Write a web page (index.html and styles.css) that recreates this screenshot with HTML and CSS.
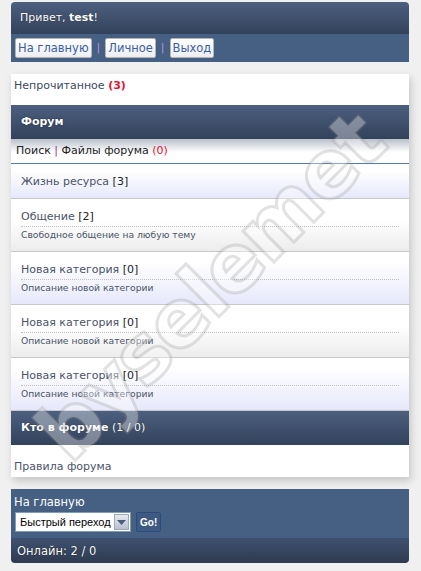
FILE: index.html
```html
<!doctype html>
<html>
	<head>
		<meta charset="utf-8">
		<title>Форум</title>
		<link rel="stylesheet" href="styles.css">
	</head>
	<body>
		<div class="page">
			<div class="head">
				Привет, <b>test</b>!
			</div>
			<div class="navbar">
				<a class="btn" href="#">На главную</a>
				<span class="sep">|</span>
				<a class="btn" href="#">Личное</a>
				<span class="sep">|</span>
				<a class="btn" href="#">Выход</a>
			</div>

			<div class="content">
				<div class="unread">
					Непрочитанное <span class="count-bold">(3)</span>
				</div>

				<div class="bar bar-forum">Форум</div>
				<div class="subbar">
					Поиск <span class="sep">|</span> Файлы форума <span class="count">(0)</span>
				</div>

				<div class="cat cat-single odd">
					<div class="cat-title">Жизнь ресурса <span class="num">[3]</span></div>
				</div>
				<div class="cat even">
					<div class="cat-title line">Общение <span class="num">[2]</span></div>
					<div class="cat-desc">Свободное общение на любую тему</div>
				</div>
				<div class="cat odd">
					<div class="cat-title line">Новая категория <span class="num">[0]</span></div>
					<div class="cat-desc">Описание новой категории</div>
				</div>
				<div class="cat even">
					<div class="cat-title line">Новая категория <span class="num">[0]</span></div>
					<div class="cat-desc">Описание новой категории</div>
				</div>
				<div class="cat odd">
					<div class="cat-title line">Новая категория <span class="num">[0]</span></div>
					<div class="cat-desc">Описание новой категории</div>
				</div>

				<div class="bar bar-who"><b>Кто в форуме</b> (1 / 0)</div>
				<div class="rules">Правила форума</div>
			</div>

			<div class="foot">
				<div class="foot-link">На главную</div>
				<form class="jump-form">
					<span class="jump">
						<select class="jump-select">
							<option>Быстрый переход</option>
						</select>
						<span class="jump-arrow">
							<svg width="9" height="5" viewBox="0 0 9 5"><path d="M0 0h9L4.5 5z" fill="#4a5a7a"/></svg>
						</span>
					</span>
					<button class="go" type="button">Go!</button>
				</form>
			</div>
			<div class="online">Онлайн: 2 / 0</div>
		</div>

		<!-- watermark over the screenshot -->
		<div class="stamp">byselemet</div>
	</body>
</html>
```

FILE: styles.css
```css
body {
	margin: 0;
	background: #f0f0f0;
	font-family: "DejaVu Sans", Verdana, sans-serif;
	font-size: 11px;
	position: relative;
	overflow: hidden;
	height: 571px;
}

.page {
	width: 398px;
	margin: 2px 0 0 11px;
}

.head {
	height: 32px;
	line-height: 32px;
	padding-left: 9px;
	color: white;
	border-radius: 4px 4px 0 0;
	background: linear-gradient(#4c5f7f, #33425b);
	text-shadow: 0 0 1px rgba(0, 0, 0, 0.6);
}

.navbar {
	height: 28px;
	padding: 4px 0 0 4px;
	box-sizing: border-box;
	background: #466084;
	display: flex;
	align-items: flex-start;
	gap: 5px;
}

.btn {
	display: inline-block;
	height: 18px;
	line-height: 18px;
	padding: 0 2px;
	border: 1px solid #b4b4b4;
	border-radius: 2px;
	background: linear-gradient(#ffffff, #eceef2);
	color: #3b5f9f;
	text-decoration: none;
	font-size: 11.5px;
}

.sep {
	color: #8c3a9a;
}

.navbar .sep {
	line-height: 20px;
	color: #c58ad8;
}

.content {
	margin-top: 12px;
	background: white;
	box-shadow: 2px 4px 8px rgba(0, 0, 0, 0.18);
}

.unread {
	height: 31px;
	padding: 5px 0 0 3px;
	box-sizing: border-box;
	color: #3c4a5e;
}

.count-bold {
	color: #e8102c;
	font-weight: bold;
}

.count {
	color: #e8102c;
}

.bar {
	height: 34px;
	line-height: 34px;
	padding-left: 10px;
	color: white;
	background: linear-gradient(#4c5f7f, #33425b);
	text-shadow: 0 0 1px rgba(0, 0, 0, 0.5);
}

.bar-forum {
	font-weight: bold;
	text-shadow: 0 0 2px rgba(0, 0, 0, 0.6);
}

.subbar {
	height: 24px;
	line-height: 24px;
	padding-left: 5px;
	color: #222;
	border-bottom: 1px solid #5a7aa6;
	background: linear-gradient(#b9bfc9, #ffffff 55%);
}

.cat {
	padding: 9px 10px 0 10px;
	border-bottom: 1px solid #c8c8c8;
	box-sizing: border-box;
	height: 53px;
}

.cat-single {
	height: 35px;
}

.odd {
	background: linear-gradient(#ffffff 20%, #e6e8fb);
}

.even {
	background: linear-gradient(#ffffff 40%, #ececec);
}

.cat-title {
	color: #4a5468;
	line-height: 17px;
}

.cat-title.line {
	border-bottom: 1px dotted #c0c0c0;
	padding-bottom: 1px;
}

.num {
	color: #222;
}

.cat-desc {
	color: #4a5468;
	font-size: 9.2px;
	line-height: 15px;
}

.rules {
	height: 32px;
	padding: 15px 0 0 3px;
	box-sizing: border-box;
	color: #4a5468;
}

.foot {
	margin-top: 12px;
	background: #466084;
	padding: 5px 0 6px 3px;
	color: white;
}

.foot-link {
	line-height: 16px;
	font-size: 11.5px;
}

.jump-form {
	margin: 2px 0 0 1px;
	display: flex;
	gap: 5px;
}

.jump {
	display: inline-flex;
	height: 18px;
	border: 1px solid #7f9db9;
	background: white;
}

.jump-select {
	appearance: none;
	border: none;
	background: white;
	font-family: "Liberation Sans", Arial, sans-serif;
	font-size: 11px;
	padding: 0 0 0 4px;
	width: 97px;
	color: black;
}

.jump-arrow {
	width: 15px;
	margin: 1px;
	background: linear-gradient(#e6e9ef, #b8c0cf);
	border: 1px solid #a0a8b8;
	box-sizing: border-box;
	display: flex;
	align-items: center;
	justify-content: center;
}

.go {
	height: 20px;
	padding: 0 3px;
	border: 1px solid #2a4b7e;
	border-radius: 2px;
	background: #3f5a82;
	color: white;
	font-family: "Liberation Sans", Arial, sans-serif;
	font-size: 10px;
	font-weight: bold;
}

.online {
	height: 25px;
	line-height: 26px;
	padding-left: 6px;
	color: white;
	font-size: 11.5px;
	border-radius: 0 0 4px 4px;
	background: linear-gradient(#3f5170, #2e3a4f);
	text-shadow: 0 0 1px rgba(0, 0, 0, 0.8);
}

.stamp {
	position: absolute;
	left: -15px;
	top: 240px;
	font-family: "DejaVu Sans", sans-serif;
	font-weight: bold;
	font-size: 80px;
	letter-spacing: -2px;
	color: rgba(255, 255, 255, 0.35);
	-webkit-text-stroke: 3px rgba(140, 140, 140, 0.25);
	transform: rotate(-45deg);
	transform-origin: 50% 50%;
	pointer-events: none;
}
```
